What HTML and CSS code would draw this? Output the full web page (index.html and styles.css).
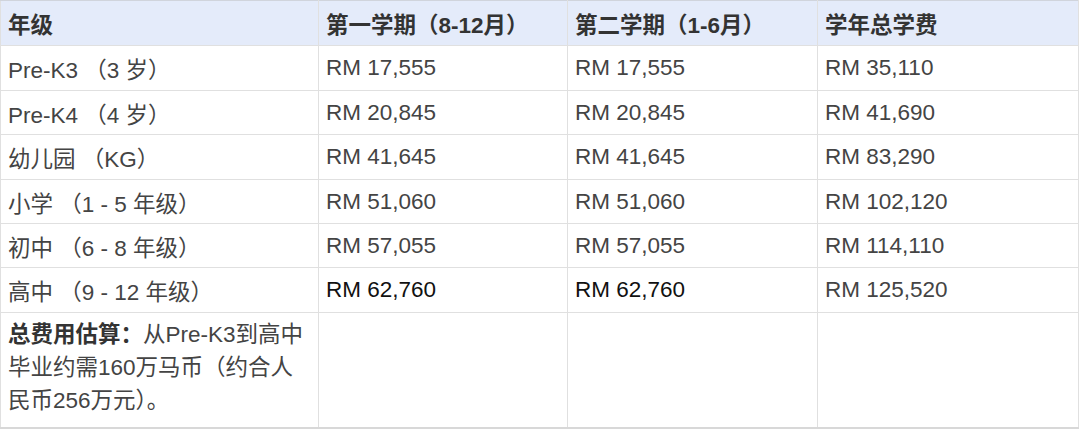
FILE: index.html
```html
<!DOCTYPE html>
<html lang="zh">
<head>
<meta charset="utf-8">
<link rel="stylesheet" href="styles.css">
</head>
<body>
<table class="fees">
  <colgroup>
    <col class="c1"><col class="c2"><col class="c3"><col class="c4">
  </colgroup>
  <thead>
    <tr class="head">
      <th>年级</th>
      <th>第一学期（8-12月）</th>
      <th>第二学期（1-6月）</th>
      <th>学年总学费</th>
    </tr>
  </thead>
  <tbody>
    <tr class="r45"><td>Pre-K3 （3 岁）</td><td>RM 17,555</td><td>RM 17,555</td><td>RM 35,110</td></tr>
    <tr class="r44"><td>Pre-K4 （4 岁）</td><td>RM 20,845</td><td>RM 20,845</td><td>RM 41,690</td></tr>
    <tr class="r45"><td>幼儿园 （KG）</td><td>RM 41,645</td><td>RM 41,645</td><td>RM 83,290</td></tr>
    <tr class="r44"><td>小学 （1 - 5 年级）</td><td>RM 51,060</td><td>RM 51,060</td><td>RM 102,120</td></tr>
    <tr class="r44"><td>初中 （6 - 8 年级）</td><td>RM 57,055</td><td>RM 57,055</td><td>RM 114,110</td></tr>
    <tr class="r45"><td>高中 （9 - 12 年级）</td><td class="dark">RM 62,760</td><td class="dark">RM 62,760</td><td>RM 125,520</td></tr>
    <tr class="last"><td class="note"><b>总费用估算：</b>从Pre-K3到高中<br>毕业约需160万马币（约合人<br>民币256万元）。</td><td></td><td></td><td></td></tr>
  </tbody>
</table>
</body>
</html>
```

FILE: styles.css
```css
html, body {
  margin: 0;
  padding: 0;
  background: #ffffff;
}

.fees {
  border-collapse: collapse;
  width: 1078px;
  table-layout: fixed;
  font-family: "Liberation Sans", "Noto Sans CJK SC", sans-serif;
  font-size: 22.5px;
  color: #444444;
  border: 1px solid #d4d4d4;
}

.c1 { width: 318px; }
.c2 { width: 249px; }
.c3 { width: 250px; }
.c4 { width: 261px; }

.fees th,
.fees td {
  border: 1px solid #e0e0e0;
  padding: 0 7px;
  text-align: left;
  vertical-align: middle;
  white-space: nowrap;
}

.head th {
  background: #e4ebfa;
  color: #333333;
  font-weight: bold;
  height: 44px;
  border-top-color: #d0d4dc;
}

.r45 td { height: 44px; }
.r44 td { height: 43px; }

.fees td.dark { color: #111111; }

.last td {
  height: 109px;
  vertical-align: top;
  border-bottom: 2px solid #d8d8d8;
}

.fees td.note {
  white-space: normal;
  line-height: 33px;
  padding-top: 5px;
  padding-bottom: 0;
}

.note b {
  color: #333333;
}
```
